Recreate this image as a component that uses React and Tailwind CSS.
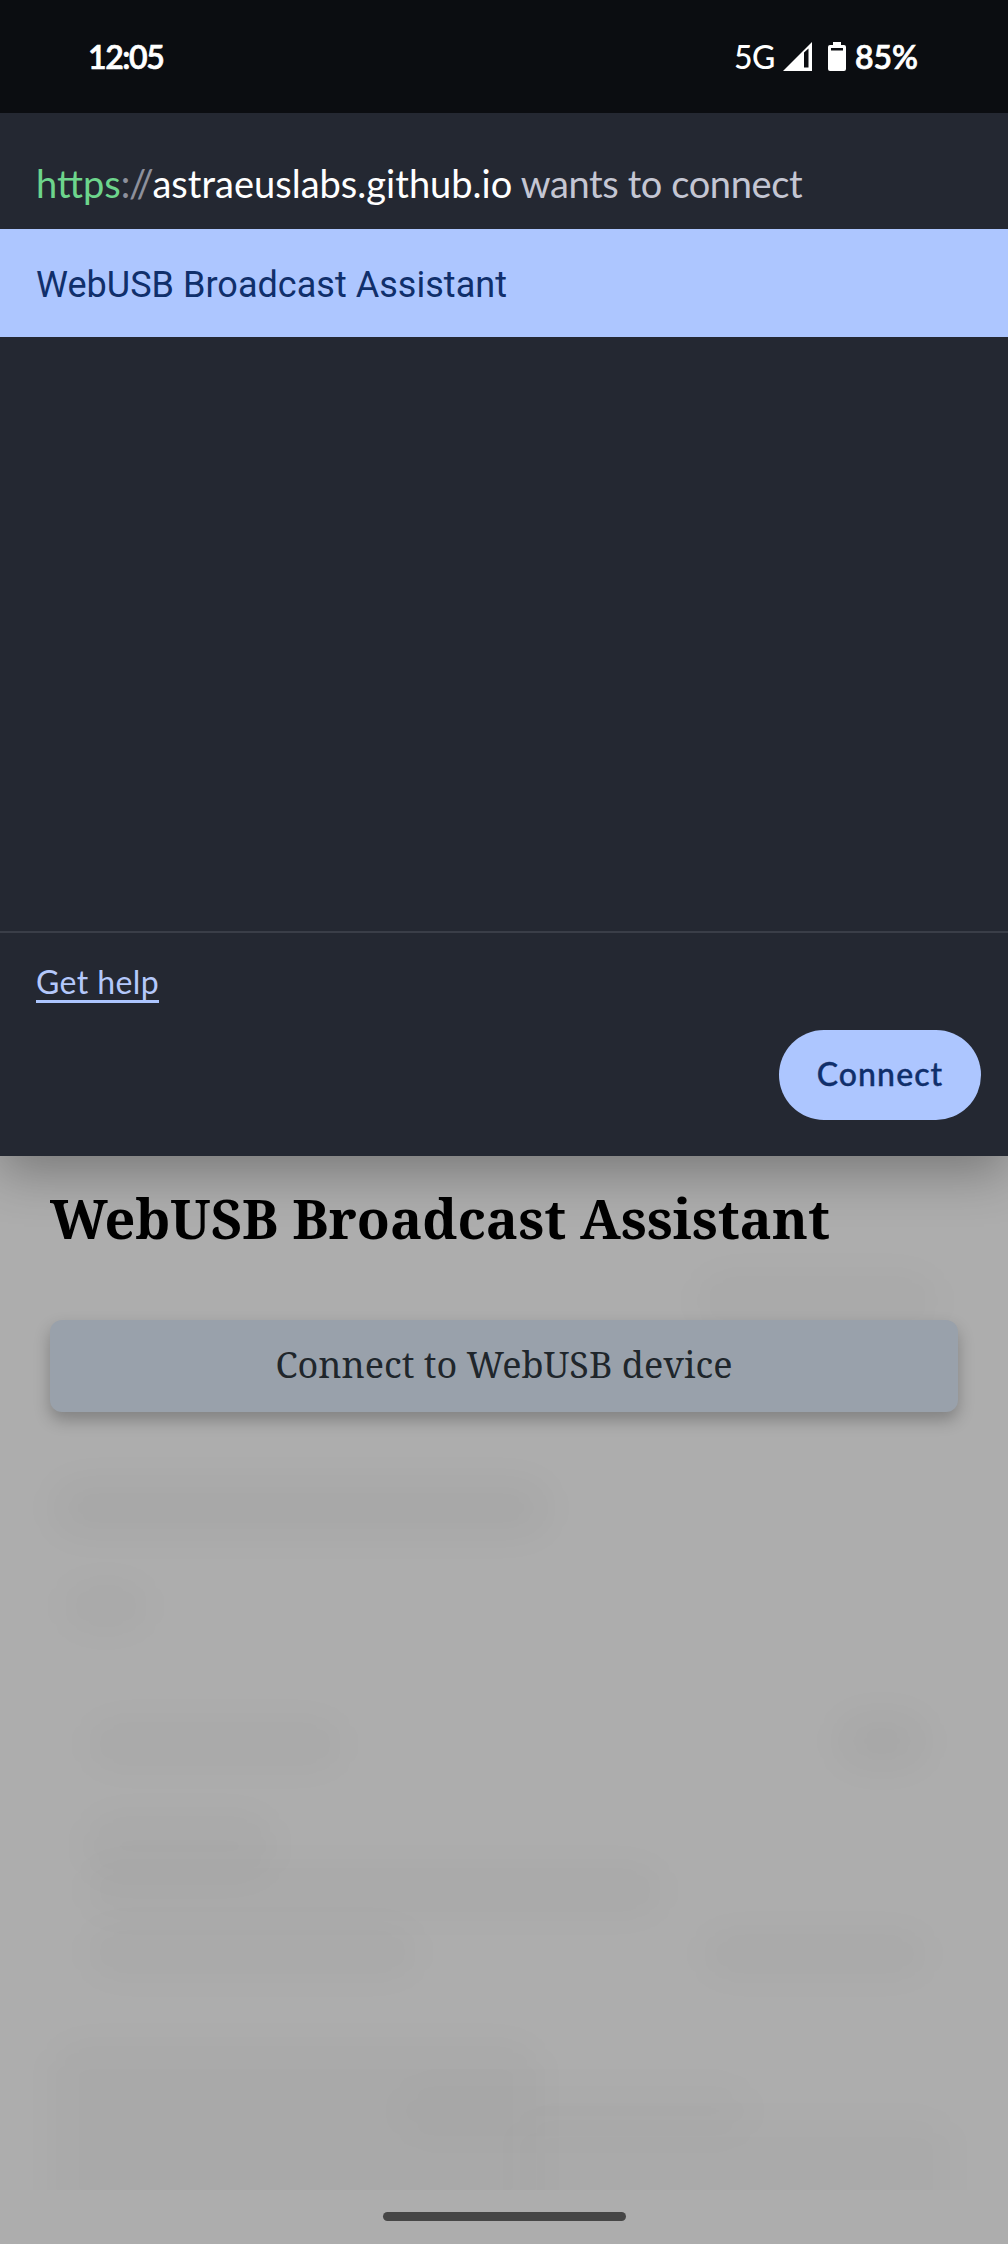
const smudges = [
  'left-[56px] top-[1484px] w-[490px] h-[48px] bg-black/3',
  'left-[66px] top-[1584px] w-[80px] h-[44px] bg-black/2',
  'left-[90px] top-[1722px] w-[250px] h-[44px] bg-black/2',
  'left-[840px] top-[1718px] w-[84px] h-[46px] bg-black/3',
  'left-[90px] top-[1816px] w-[180px] h-[60px] bg-black/2',
  'left-[90px] top-[1868px] w-[570px] h-[44px] bg-black/2',
  'left-[90px] top-[1930px] w-[325px] h-[44px] bg-black/2',
  'left-[705px] top-[1934px] w-[220px] h-[40px] bg-black/2',
  'left-[56px] top-[2046px] w-[480px] h-[170px] bg-black/2',
  'left-[400px] top-[2086px] w-[350px] h-[50px] bg-black/1',
  'left-[520px] top-[2120px] w-[430px] h-[100px] bg-black/1',
  'left-[700px] top-[1276px] w-[235px] h-[50px] bg-black/2',
];

function SignalIcon() {
  return (
    <svg className="ml-[8px] h-[29px] w-[29px]" viewBox="0 0 29 29">
      <path d="M0 29 L29 0 V29 Z M21 10.5 V25.5 H25.5 V6.5 Z" fill="#fff" fillRule="evenodd" />
    </svg>
  );
}

function BatteryIcon() {
  return (
    <svg className="ml-[16px] h-[29px] w-[18px]" viewBox="0 0 18 29">
      <path
        d="M5 0 H13 V3 H16 Q18 3 18 5 V27 Q18 29 16 29 H2 Q0 29 0 27 V5 Q0 3 2 3 H5 Z M3 6 V8.5 H15 V6 Z"
        fill="#fff"
        fillRule="evenodd"
      />
    </svg>
  );
}

export default function App() {
  return (
    <div className="relative isolate flex h-[2244px] w-[1008px] flex-col overflow-hidden bg-[#adadad] font-['Lato',sans-serif]">
      <div className="absolute inset-x-0 top-0 -z-10 h-[2190px] overflow-hidden">
        {smudges.map((s) => (
          <div key={s} className={`absolute rounded-[24px] blur-[18px] ${s}`} />
        ))}
      </div>

      <header className="z-10 flex h-[113px] shrink-0 items-center justify-between bg-[#0b0d11] pr-[90px] pl-[88px] text-[32px] font-semibold text-white">
        <span className="tracking-[-1.4px] [-webkit-text-stroke:0.7px_white]">12:05</span>
        <div className="flex items-center">
          <span className="font-medium tracking-[-0.5px]">5G</span>
          <SignalIcon />
          <BatteryIcon />
          <span className="ml-[9px] [-webkit-text-stroke:0.7px_white]">85%</span>
        </div>
      </header>

      <section className="flex h-[1043px] shrink-0 flex-col bg-[#242832] shadow-[0_16px_48px_rgba(0,0,0,0.3)]">
        <h2 className="flex h-[116px] items-center pt-[24px] pl-[36px] text-[38px] whitespace-pre text-[#c4c6d3]">
          <span className="text-[#6dd58c]">https</span>
          <span className="tracking-[-1.2px] text-[#8d909c]">://</span>
          <span className="tracking-[0.02px] text-white">astraeuslabs.github.io</span>
          <span className="tracking-[-0.4px]"> wants to connect</span>
        </h2>
        <div className="flex h-[108px] items-center bg-[#adc6ff] pt-[3px] pl-[36px] font-['Roboto',sans-serif] text-[36px] tracking-[0.03px] text-[#102f6b]">
          <span>WebUSB Broadcast Assistant</span>
        </div>
        <div className="flex-1" />
        <footer className="flex h-[225px] flex-col border-t-2 border-[#3a3e48] pt-[30px] pl-[36px]">
          <a className="self-start border-b-3 border-[#adc6ff] text-[32px] leading-[37px] tracking-[0.4px] text-[#b4c8fb]">Get help</a>
          <button className="mt-[27px] mr-[27px] h-[90px] w-[202px] self-end rounded-full bg-[#adc6ff] pb-[2px] text-[32px] font-medium tracking-[1.1px] text-[#102f6b] [-webkit-text-stroke:0.4px_#102f6b]">
            Connect
          </button>
        </footer>
      </section>

      <main className="px-[50px] pt-[22px] font-['Noto_Serif','DejaVu_Serif_Condensed','DejaVu_Serif',serif]">
        <h1 className="text-[54px] leading-[80px] font-bold whitespace-nowrap text-black">
          <span>WebUSB Broadcast Assistant</span>
        </h1>
        <button className="mt-[62px] h-[92px] w-full rounded-[12px] bg-[#99a1ab] pb-[2px] text-[36px] text-[#20262b] shadow-[0_8px_16px_rgba(0,0,0,0.25)]">
          <span>Connect to WebUSB device</span>
        </button>
      </main>

      <div className="mt-auto mb-[23px] h-[9px] w-[243px] self-center rounded-full bg-[#464646]" />
    </div>
  );
}
